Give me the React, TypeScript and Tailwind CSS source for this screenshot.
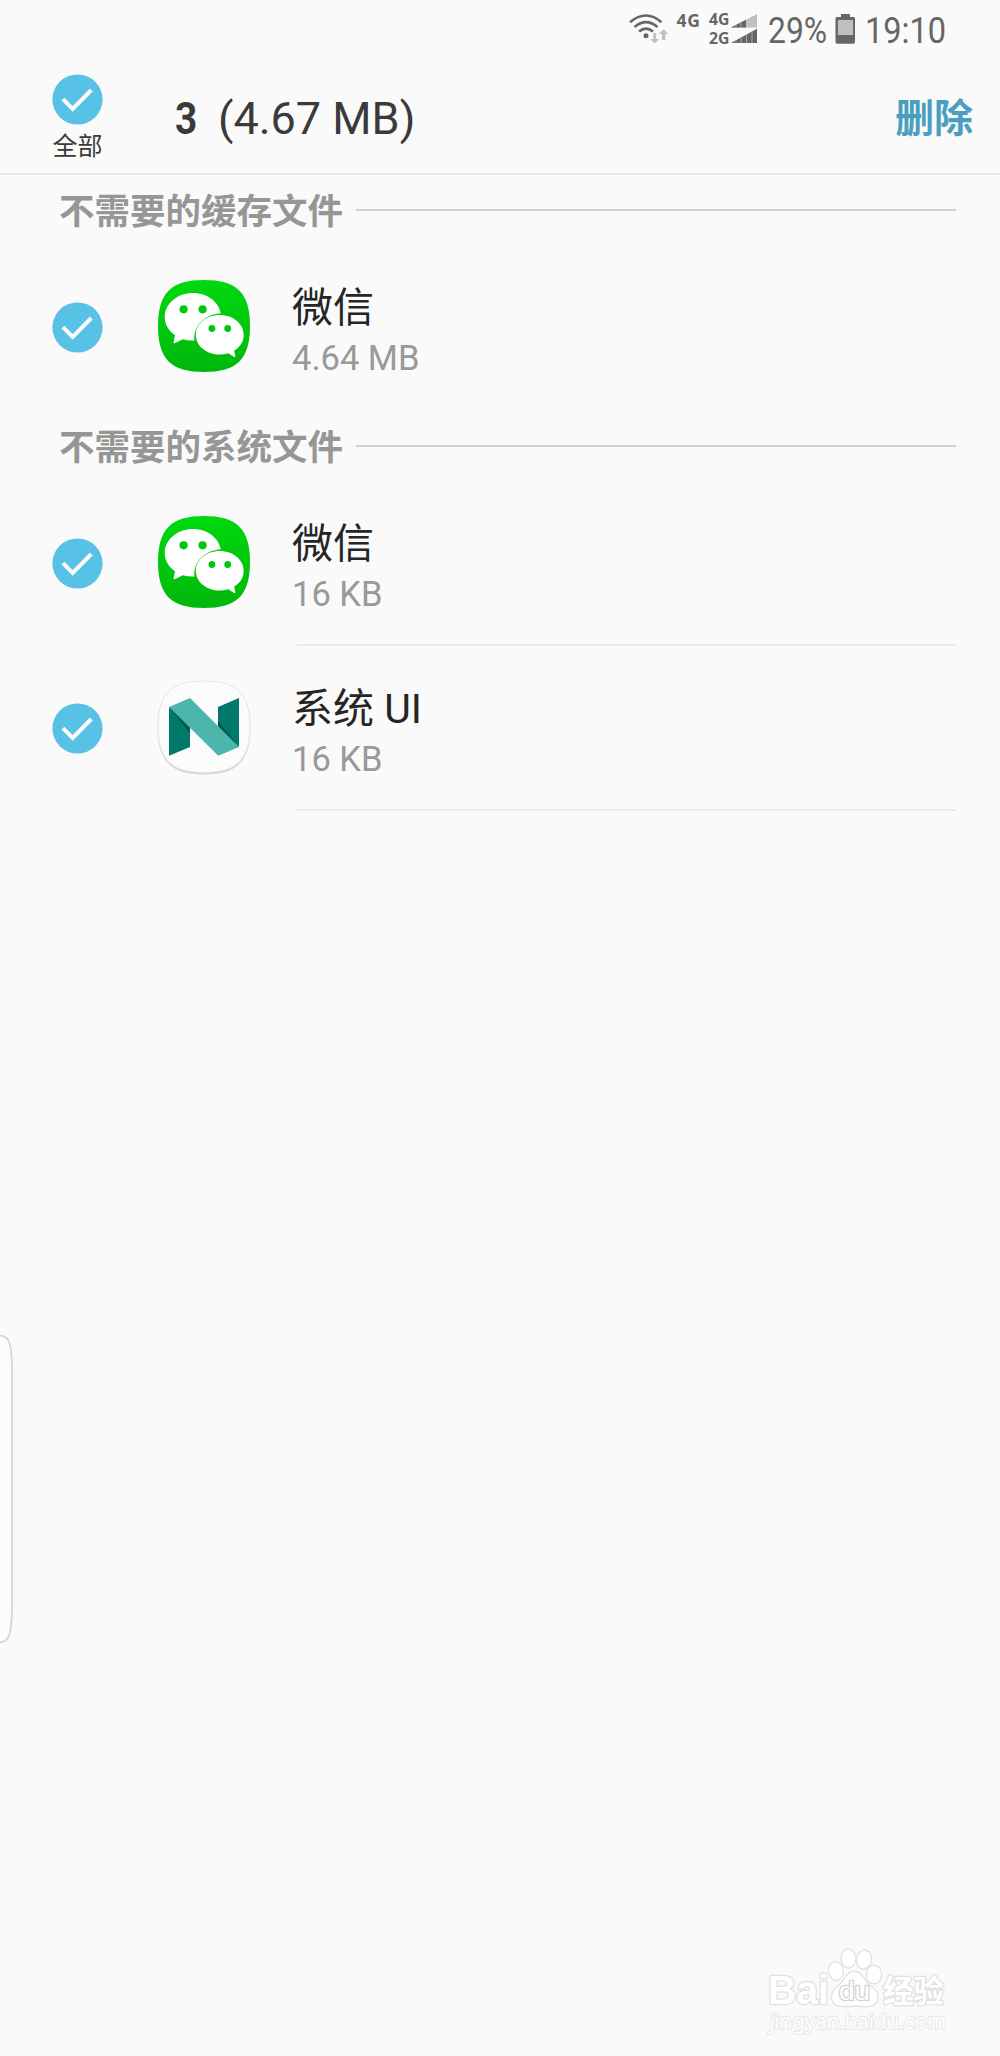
import type { ReactNode } from 'react';

type Item = {
  id: string;
  name: string;
  size: string;
  icon: ReactNode;
  divider?: boolean;
};

function CheckCircle() {
  return (
    <svg className="block size-[51px] shrink-0" viewBox="0 0 51 51">
      <circle cx="25.5" cy="25.5" r="25.1" fill="#57c1e6" />
      <path d="M10.9 25.2 L20.7 35 L39.3 16" fill="none" stroke="#fafafa" strokeWidth="4" />
    </svg>
  );
}

function WeChatIcon() {
  return (
    <svg className="block size-[94px] shrink-0" viewBox="0 0 94 94">
      <defs>
        <linearGradient id="wechat" x1="0" y1="0" x2="0" y2="1">
          <stop offset="0" stopColor="#00d90f" />
          <stop offset="1" stopColor="#00b70b" />
        </linearGradient>
      </defs>
      <path
        d="M47 1 C80 1 93 14 93 47 C93 80 80 93 47 93 C14 93 1 80 1 47 C1 14 14 1 47 1 Z"
        fill="url(#wechat)"
      />
      <path
        d="M36 14 C20.5 14 7.7 24.6 7.7 38 C7.7 45.5 11.8 52 18 56.3 L16.5 63.8 Q17 64.6 18 64 L26 60.2 Q31 61.9 37.5 61.5 C36 49 45 36 63.8 34.2 C61.5 22.5 50 14 36 14 Z"
        fill="#fff"
      />
      <path
        d="M62.8 36 C49.5 36 38.8 44.7 38.8 55.7 C38.8 66.8 49.5 75.5 62.8 75.5 Q67.2 75.5 71.2 74.3 L77.3 78 Q78.3 78.4 78.4 77.4 L77.2 71.5 C83.2 68 86.7 62.5 86.7 55.7 C86.7 44.7 76 36 62.8 36 Z"
        fill="#fff"
      />
      <g fill="#00c80d">
        <circle cx="26.6" cy="30.3" r="4.1" />
        <circle cx="45.6" cy="30.3" r="4.1" />
        <circle cx="54.9" cy="49.5" r="3.4" />
        <circle cx="70.7" cy="49.5" r="3.4" />
      </g>
    </svg>
  );
}

function NougatIcon() {
  return (
    <svg className="block size-[94px] shrink-0 overflow-visible" viewBox="0 0 94 94">
      <path
        d="M47 1.5 C80 1.5 93 14.5 93 47.5 C93 81 80 94 47 94 C14 94 1 81 1 47.5 C1 14.5 14 1.5 47 1.5 Z"
        fill="#d2d2d2"
        stroke="#d6d6d6"
        strokeWidth="1"
      />
      <path
        d="M47 1 C80 1 93 14 93 46.5 C93 79 80 92.5 47 92.5 C14 92.5 1 79 1 46.5 C1 14 14 1 47 1 Z"
        fill="#fbfbfb"
        stroke="#e4e4e4"
        strokeWidth="0.8"
      />
      <path d="M12 27 L33 47 V67 L12 75.7 Z" fill="#00796b" />
      <path d="M12 27 L33 53 V42 Z" fill="#00594c" />
      <path d="M61 27 L82 18 V67 L61 46 Z" fill="#00796b" />
      <path d="M61 41 L82 67 L61 49 Z" fill="#00594c" />
      <path d="M12 27 L33 18 L82 67 L61.3 75.7 Z" fill="#4db6ac" />
    </svg>
  );
}

const cacheFiles: Item[] = [
  { id: 'wechat-cache', name: '微信', size: '4.64 MB', icon: <WeChatIcon /> },
];

const systemFiles: Item[] = [
  { id: 'wechat-system', name: '微信', size: '16 KB', icon: <WeChatIcon />, divider: true },
  { id: 'system-ui', name: '系统 UI', size: '16 KB', icon: <NougatIcon />, divider: true },
];

function StatusBar() {
  return (
    <div className="flex h-[60px] text-[#666666]">
      <svg className="ml-[624px] h-[60px] w-[140px] shrink-0" viewBox="624 0 140 60">
        {/* Wifi */}
        <g fill="none" stroke="#666666" strokeWidth="2.6">
          <path d="M630 22.2 Q646 8.8 661.5 22.2" />
          <path d="M634.5 27 Q646 17.2 657.5 27" />
          <path d="M639 31.5 Q646 25.6 653 31.5" />
        </g>
        <circle cx="646" cy="35.8" r="2.5" fill="#666666" />
        <path
          d="M653.2 33 h3 v6 h3 L654.7 43.5 L650.2 39 h3 Z M662 40 h3.4 v-6 h3 L663.7 29.3 L659 34 h3 Z"
          fill="#c0c0c0"
        />
        <g fill="#666666" fontFamily="'Open Sans', sans-serif" fontWeight="700">
          <text x="676.5" y="27.3" fontSize="17.5" textLength="23.5">4G</text>
          <text x="709" y="25.3" fontSize="16.5" textLength="20.5" lengthAdjust="spacingAndGlyphs">4G</text>
          <text x="709" y="43.5" fontSize="16.5" textLength="20.5" lengthAdjust="spacingAndGlyphs">2G</text>
        </g>
        {/* Signal bars for both sims */}
        <path d="M731 27.5 L757 14 V27.5 Z" fill="#c0c0c0" />
        <path d="M731 27.5 L746 19.7 V27.5 Z M731 43 L757 28.8 V43 Z" fill="#666666" />
        <path
          d="M736 25 v2.5 M741 22.5 v5 M736 40.5 v2.5 M741 37.7 v5.3 M746.5 34.7 v8.3 M752 31.7 v11.3"
          stroke="#b0b0b0"
          strokeWidth="0.9"
        />
      </svg>
      <span className="ml-[4px] w-[60px] origin-left scale-x-[0.86] text-[37px] leading-[61px]">29%</span>
      <svg className="ml-[7px] h-[60px] w-[21px] shrink-0" viewBox="0 0 21 60">
        <path d="M6 14 h9 v3 h3.5 q1.5 0 1.5 1.5 V42 q0 1.7 -1.7 1.7 H2.2 Q0.5 43.7 0.5 42 V18.5 Q0.5 17 2 17 H6 Z" fill="#666666" />
        <path d="M3 20 h15 v15 h-15 Z" fill="#c0c0c0" />
      </svg>
      <span className="ml-[9px] origin-left scale-x-[0.88] text-[37px] leading-[61px]">19:10</span>
    </div>
  );
}

function Header() {
  return (
    <header className="flex h-[115px] border-b-2 border-[#e8e8e8] text-[#3a3a3a]">
      <div className="ml-[52px] flex w-[51px] flex-col items-center pt-[14px]">
        <CheckCircle />
        <span className="text-[25px] leading-[43px] whitespace-nowrap">全部</span>
      </div>
      <span className="ml-[72px] w-[43px] origin-left scale-x-[0.86] text-[45px] leading-[118px] font-bold">3</span>
      <span className="text-[45px] leading-[118px] whitespace-nowrap">(4.67 MB)</span>
      <button className="mt-[4px] mr-[27px] ml-auto h-[110px] text-[39px] leading-[110px] font-bold text-[#4a9fc0]">删除</button>
    </header>
  );
}

function SectionTitle({ title }: { title: string }) {
  return (
    <div className="flex h-[70px] items-center pr-[44px] pl-[59px]">
      <h2 className="w-[297px] shrink-0 pt-[3px] text-[35.5px] leading-[66px] font-bold whitespace-nowrap text-[#969696]">{title}</h2>
      <div className="h-[2px] flex-1 bg-[#d2d2d2]" />
    </div>
  );
}

function FileRow({ item }: { item: Item }) {
  return (
    <div className="flex h-[165px] items-center pl-[52px]">
      <CheckCircle />
      <div className="ml-[54px] pb-[3px]">{item.icon}</div>
      <div className="flex h-full flex-1 flex-col pt-[33px] pl-[41px]">
        <div className="text-[41px] leading-[60px] text-[#252525]">{item.name}</div>
        <div className="text-[34.5px] leading-[41px] text-[#999999]">{item.size}</div>
        {item.divider && <div className="mt-auto mr-[44px] ml-[5px] h-[2px] bg-[#ebebeb]" />}
      </div>
    </div>
  );
}

function Watermark() {
  return (
    <svg className="absolute right-[45px] bottom-[6px] h-[110px] w-[200px] overflow-visible" viewBox="0 0 200 110">
      <g
        fill="#fff"
        stroke="#e0e0e0"
        strokeWidth="2.4"
        paintOrder="stroke"
        strokeLinejoin="round"
        fontFamily="'Liberation Sans', 'Noto Sans CJK SC', sans-serif"
      >
        <ellipse cx="81" cy="31" rx="6.8" ry="8.8" transform="rotate(-8 81 31)" />
        <ellipse cx="93.5" cy="18.5" rx="6.8" ry="9" />
        <ellipse cx="109" cy="19.5" rx="6.8" ry="9" transform="rotate(12 109 19.5)" />
        <ellipse cx="119" cy="34.5" rx="7" ry="8.8" />
        <path d="M99.5 32 C107 32 108.5 41 115 46 C121 50 124 54 122 60 C120 68 110 66 100 65.5 C90 66 80 68 77.5 60 C76 53 80 49 85 45 C91 39 92 32 99.5 32 Z" />
        <text x="13" y="64" fontSize="40" fontWeight="700" textLength="61" lengthAdjust="spacingAndGlyphs">Bai</text>
        <text x="84" y="60" fontSize="25" textLength="31" lengthAdjust="spacingAndGlyphs" stroke="#d2d2d2">du</text>
        <text x="128" y="62" fontSize="30.5" fontWeight="700">经验</text>
        <text
          x="14"
          y="88.5"
          fontSize="22"
          fontFamily="'Noto Sans', sans-serif"
          textLength="177"
          lengthAdjust="spacingAndGlyphs"
          stroke="#e6e6e6"
          strokeWidth="2"
        >
          jingyan.baidu.com
        </text>
      </g>
    </svg>
  );
}

export default function App() {
  return (
    <div className="relative h-[2056px] w-[1000px] overflow-hidden bg-[#fafafa] font-[Roboto,'Noto_Sans_CJK_SC',sans-serif]">
      <StatusBar />
      <Header />
      <main className="flex flex-col">
        <section>
          <SectionTitle title="不需要的缓存文件" />
          {cacheFiles.map((item) => (
            <FileRow key={item.id} item={item} />
          ))}
        </section>
        <section className="pt-px">
          <SectionTitle title="不需要的系统文件" />
          {systemFiles.map((item) => (
            <FileRow key={item.id} item={item} />
          ))}
        </section>
      </main>

      {/* Edge panel handle */}
      <svg className="absolute top-[1330px] left-0 h-[318px] w-[16px]" viewBox="0 0 16 318">
        <path d="M-3 5.5 C8 5 11.5 9 12 38 V280 C11.5 308 8 313 -3 312.5" fill="#fcfcfc" stroke="#d2d2d2" strokeWidth="1.6" />
      </svg>
      <Watermark />
    </div>
  );
}
